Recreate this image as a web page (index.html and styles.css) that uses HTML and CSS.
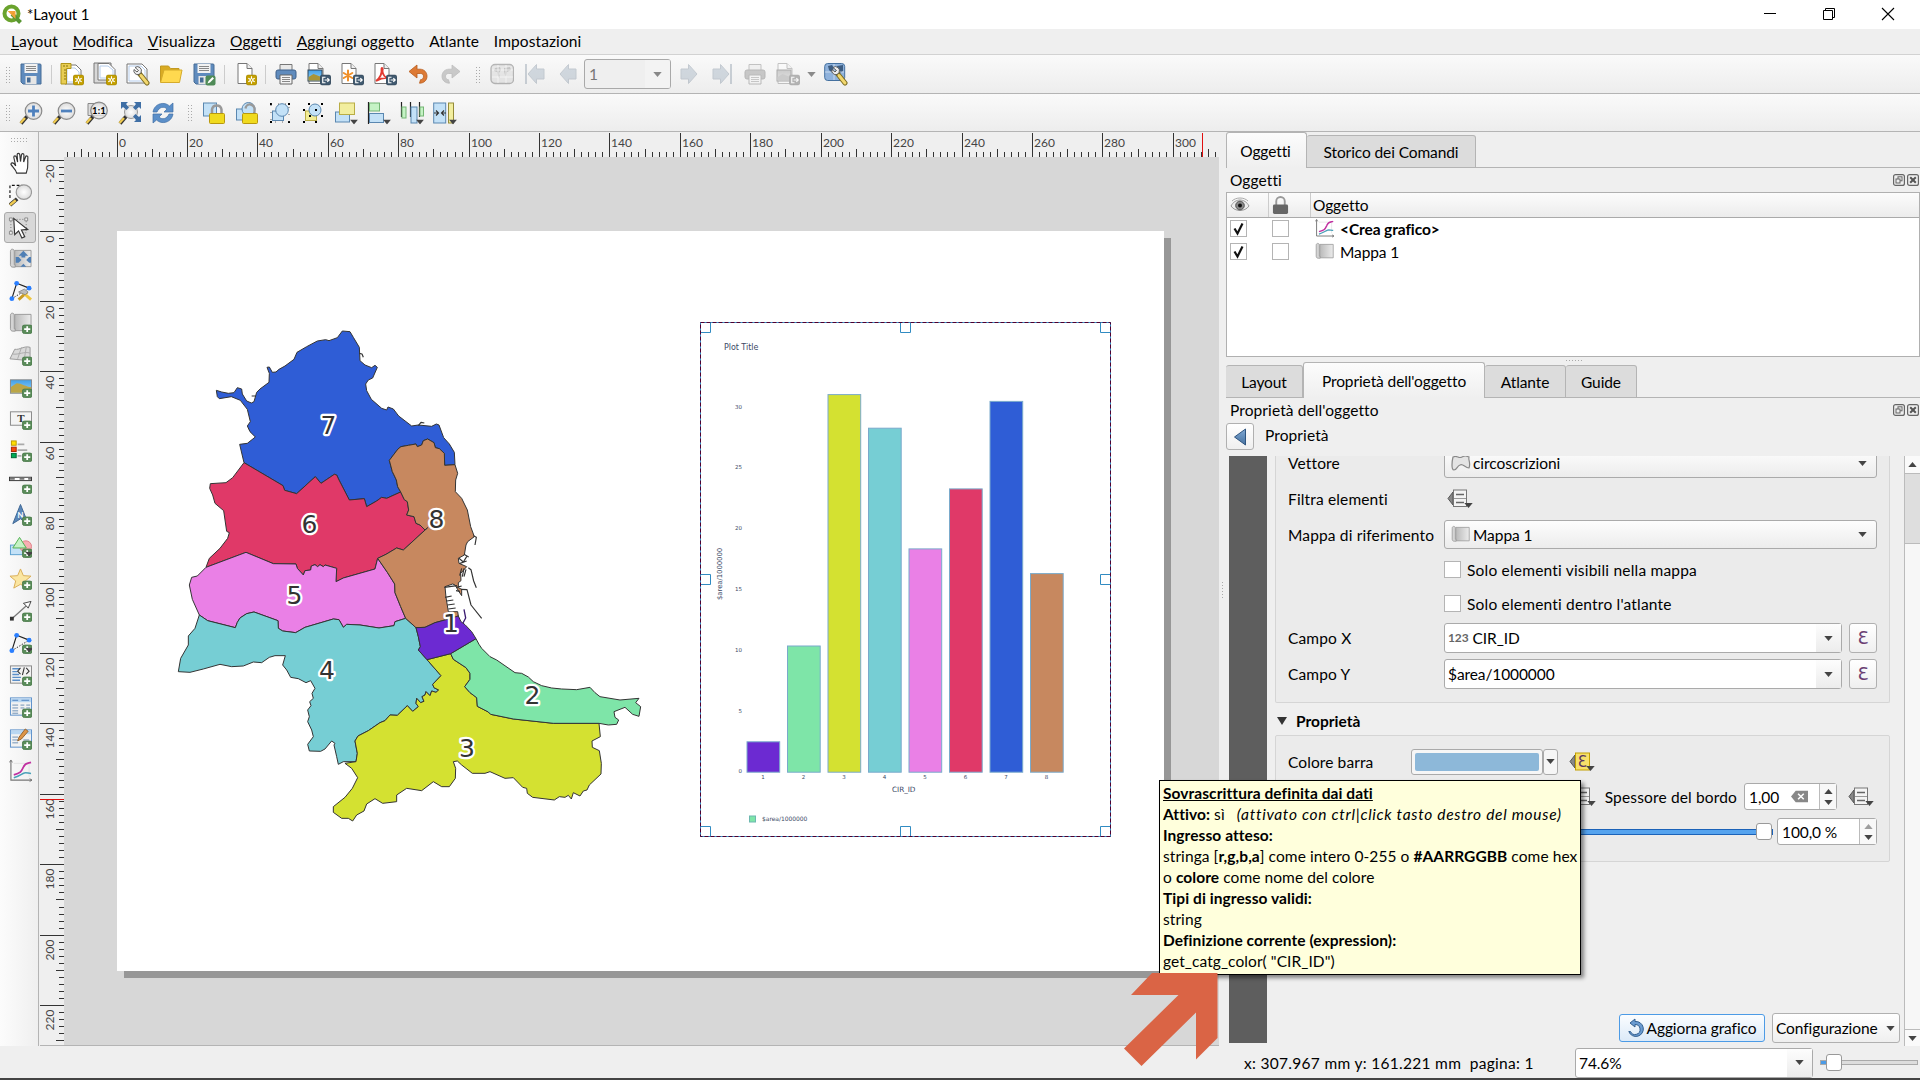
FILE: index.html
```html
<!DOCTYPE html>
<html lang="it">
<head>
<meta charset="utf-8">
<title>*Layout 1</title>
<link rel="stylesheet" href="styles.css">
</head>
<body>
<svg class="defs" aria-hidden="true">
  <defs>
    <linearGradient id="gGrey" x1="0" x2="1"><stop offset="0" stop-color="#b9b9b9"/><stop offset="1" stop-color="#ececec"/></linearGradient>
    <linearGradient id="gBlue" x1="0" y1="0" x2="0" y2="1"><stop offset="0" stop-color="#7fa8d4"/><stop offset="1" stop-color="#47719f"/></linearGradient>
    <linearGradient id="gSky" x1="0" y1="0" x2="0" y2="1"><stop offset="0" stop-color="#3f9fe8"/><stop offset="1" stop-color="#9fd4f5"/></linearGradient>
    <radialGradient id="gLens"><stop offset="0" stop-color="#fff"/><stop offset="1" stop-color="#dcdcdc"/></radialGradient>

    <symbol id="b-new" viewBox="0 0 12 12"><rect x=".5" y=".5" width="11" height="11" rx="2" fill="#c4a000" stroke="#a88a00"/><path d="M6 2v8M2.500 4l7 4M9.500 4l-7 4" stroke="#fff" stroke-width="1.200"/><circle cx="6" cy="6" r="1.500" fill="#c4a000" stroke="#fff"/></symbol>
    <symbol id="b-exp" viewBox="0 0 12 12"><rect x=".5" y=".5" width="11" height="11" rx="2" fill="#415a70" stroke="#33495c"/><path d="M6 3H3v6h3M5 6h5M8 4l2 2-2 2" fill="none" stroke="#fff" stroke-width="1.300"/></symbol>
    <symbol id="b-add" viewBox="0 0 12 11"><rect x=".5" y=".5" width="11" height="10" rx="2.500" fill="#5a8c5a" stroke="#4a7a4a"/><path d="M6 2.200v6.600M2.500 5.500h7" stroke="#fff" stroke-width="2"/></symbol>
    <symbol id="page" viewBox="0 0 24 24"><path d="M4 1.500h9l5 5v15H4z" fill="#fff" stroke="#777"/><path d="M13 1.500v5h5" fill="#eee" stroke="#777"/></symbol>
    <symbol id="wrench" viewBox="0 0 24 24"><path d="M13 11l8 10" stroke="#7a6a20" stroke-width="5" stroke-linecap="round"/><path d="M15 13.500l6 7.500" stroke="#f2d76e" stroke-width="3" stroke-linecap="round"/><path d="M9 5.500a4 4 0 0 1 6 5l-2 2a4 4 0 0 1-5-5l3 2.500 1.500-1.500z" fill="#eee" stroke="#555" stroke-width=".9"/></symbol>
    <symbol id="handle" viewBox="0 0 24 24"><path d="M2 22.500l6-7" stroke="#333" stroke-width="3.600"/><path d="M1.500 22l4.500-5" stroke="#f0cb52" stroke-width="2.500"/></symbol>
    <symbol id="tri" viewBox="0 0 10 6"><path d="M0 0h10L5 6z" fill="#444"/></symbol>
    <symbol id="tick" viewBox="0 0 15 15"><path d="M3.500 7.500L6.500 12.500 11.500 2.500" fill="none" stroke="#111" stroke-width="2.200"/></symbol>

    <symbol id="i-save" viewBox="0 0 24 24"><path d="M2 2h19a1 1 0 0 1 1 1v19H4l-2-2z" fill="#5f8bbd" stroke="#466c96"/><rect x="5.500" y="2" width="13" height="9" fill="#f2f2f2"/><path d="M7 4.500h10M7 6.500h10M7 8.500h10" stroke="#888"/><rect x="6.500" y="14" width="11" height="8" fill="#e6e6e6"/><rect x="8" y="15.500" width="3.500" height="5" fill="#466c96"/></symbol>
    <symbol id="i-saveas" viewBox="0 0 24 24"><use href="#i-save" width="24" height="24"/><rect x="13.500" y="13.500" width="10" height="10" rx="2" fill="#4f8b57"/><path d="M15.500 21.500l1-2.500 4-4 1.500 1.500-4 4z" fill="#fff"/></symbol>
    <symbol id="i-newlay" viewBox="0 0 24 24"><path d="M5 3h11l5 5v14H5z" fill="#fff" stroke="#777"/><path d="M7 6h8l4 4v10H7z" fill="none" stroke="#b5cdec"/><path d="M1 1.500h10v5H6.500V22H1z" fill="#e8cd52" stroke="#b09518"/><path d="M4 8h2M4 11h2M4 14h2M4 17h2M4 3v2M7 3v2" stroke="#8a7410"/><use href="#b-new" x="13" y="12.500" width="11" height="11"/></symbol>
    <symbol id="i-dup" viewBox="0 0 24 24"><path d="M1 1h17v20H1z" fill="#d8d8d8" stroke="#777"/><path d="M5 1.500h11l6 6V18H5z" fill="#fff" stroke="#777"/><path d="M7 4h8l5 4v8H7z" fill="none" stroke="#b5cdec"/><use href="#b-new" x="13" y="12.500" width="11" height="11"/></symbol>
    <symbol id="i-man" viewBox="0 0 24 24"><path d="M1 2h15l5 5v14H1z" fill="#fff" stroke="#777"/><path d="M3 4h12l4 4v11H3z" fill="none" stroke="#b5cdec"/><use href="#wrench" width="24" height="24"/></symbol>
    <symbol id="i-open" viewBox="0 0 24 24"><path d="M1.500 20V4h8l2 2.500H20V9" fill="#d9ab23" stroke="#c39a22"/><path d="M1.500 20.500L5 8h18l-2.500 12.500z" fill="#ffd94f" stroke="#d5ab2b"/></symbol>
    <symbol id="i-newpage" viewBox="0 0 24 24"><use href="#page" width="24" height="24"/><use href="#b-new" x="12" y="12.500" width="11" height="11"/></symbol>
    <symbol id="i-print" viewBox="0 0 24 24"><path d="M6 8V2.500h12V8" fill="#e9e9e9" stroke="#777"/><rect x="2" y="8" width="20" height="9" rx="2" fill="#5f8bbd" stroke="#3f618a"/><path d="M6 13h12v9H6z" fill="#f4f4f4" stroke="#666"/><path d="M8 15.500h8M8 17.500h8M8 19.500h8" stroke="#888"/></symbol>
    <symbol id="i-img" viewBox="0 0 24 24"><use href="#page" x="-2" width="24" height="24"/><rect x="1" y="8" width="14" height="11" fill="url(#gSky)" stroke="#345"/><path d="M1.500 15l5-3 8 3v3.500h-13z" fill="#a89438"/><use href="#b-exp" x="13" y="12.500" width="11" height="11"/></symbol>
    <symbol id="i-svg" viewBox="0 0 24 24"><use href="#page" x="-2" width="24" height="24"/><path d="M8 8.500v10M3.700 11l8.600 5M12.300 11l-8.600 5" stroke="#f0902a" stroke-width="2" stroke-linecap="round"/><use href="#b-exp" x="13" y="12.500" width="11" height="11"/></symbol>
    <symbol id="i-pdf" viewBox="0 0 24 24"><use href="#page" x="-2" width="24" height="24"/><path d="M3 19c4-3 6-8 5.500-12 0-2 2-1 1 2 0 4 3 7 6 7-4-.5-9 1-12.500 3z" fill="none" stroke="#e23b32" stroke-width="1.800"/><use href="#b-exp" x="13" y="12.500" width="11" height="11"/></symbol>
    <symbol id="i-undo" viewBox="0 0 24 24"><path d="M3 9.500L11 3v4.200h3c4 0 7 3 7 7 0 4-3 7-7.500 7l1-3.500c2 0 3-1.500 3-3.500 0-1.500-1-2.700-3-2.700H11V16z" fill="#dd7a35" stroke="#b75c1c" stroke-width=".8"/></symbol>
    <symbol id="i-atlas" viewBox="0 0 24 24"><rect x="1" y="2.500" width="22.500" height="19" rx="4" fill="#c6d0dd" stroke="#555" stroke-width="1.300"/><path d="M5 6l5-1 1 3-2 3 1 5-2-1-1-5-3-1zM14 6l6-1 1 3-4 2-1 5-1-2-1-4z" fill="#6b7d92"/><path d="M2 8h21M2 15h21M8 3v18M16 3v18" stroke="#fff" stroke-width=".8"/></symbol>
    <symbol id="i-prev" viewBox="0 0 24 24"><path d="M4 12L12.500 2.500V7H20v10h-7.500v4.500z" fill="#9aabbc" stroke="#7b8b9b"/></symbol>
    <symbol id="i-first" viewBox="0 0 24 24"><path d="M2 2h2v20H2z" fill="#8796a5"/><path d="M5 12l8.500-9.500V7H21v10h-7.500v4.500z" fill="#9aabbc" stroke="#7b8b9b"/></symbol>
    <symbol id="i-atset" viewBox="0 0 24 24"><rect x=".7" y="1.500" width="20" height="17" rx="3" fill="#8fb2dc" stroke="#44709f"/><path d="M4 4l4-1 2 3-2 5-3-3zM13 4l6-1v6l-4 3z" fill="#3d5d82"/><path d="M1 10h19M10 2v16" stroke="#dfe9f5" stroke-width=".7"/><use href="#wrench" width="24" height="24"/></symbol>

    <symbol id="i-zin" viewBox="0 0 24 24"><use href="#handle" width="24" height="24"/><circle cx="14.500" cy="10" r="8.300" fill="url(#gLens)" stroke="#8a8a8a" stroke-width="1.200"/><path d="M14.500 4.500v11M9 10h11" stroke="#4f81bd" stroke-width="2.800"/></symbol>
    <symbol id="i-zout" viewBox="0 0 24 24"><use href="#handle" width="24" height="24"/><circle cx="14.500" cy="10" r="8.300" fill="url(#gLens)" stroke="#8a8a8a" stroke-width="1.200"/><path d="M9 10h11" stroke="#4f81bd" stroke-width="2.800"/></symbol>
    <symbol id="i-z11" viewBox="0 0 24 24"><path d="M3 2.500h16v12H3z" fill="#ddd" stroke="#888"/><use href="#handle" width="24" height="24"/><circle cx="14" cy="9.500" r="8.300" fill="url(#gLens)" fill-opacity=".8" stroke="#8a8a8a" stroke-width="1.200"/><text x="14" y="13" text-anchor="middle" font-family="Lato" font-weight="bold" font-size="9.500">1:1</text></symbol>
    <symbol id="i-zfull" viewBox="0 0 24 24"><use href="#handle" width="24" height="24"/><circle cx="13" cy="11" r="6.500" fill="url(#gLens)" stroke="#999"/><path d="M3 1h7L8 3l3 3.500L8.500 9 5 6 3 8zM23 1v7l-2-2-3.500 3L15 6.500 18 3l-2-2zM23 21h-7l2-2-3-3.500 2.500-2.500 3.500 3 2-2z" fill="#3f6fa5"/></symbol>
    <symbol id="i-ref" viewBox="0 0 24 24"><path d="M2 11C3 5 8 2 13 2.500c2.500.3 4 1.300 5.500 2.500L22 2v9h-9l3-3c-3-3-8-2-10 3z" fill="#5b8fc9" stroke="#3f6fa5" stroke-width=".7"/><path d="M22 13c-1 6-6 9-11 8.500-2.500-.3-4-1.300-5.500-2.500L2 22v-9h9l-3 3c3 3 8 2 10-3z" fill="#5b8fc9" stroke="#3f6fa5" stroke-width=".7"/></symbol>
    <symbol id="i-lock" viewBox="0 0 24 24"><rect x="1.500" y="2" width="13" height="13" fill="#c3e1f7" stroke="#5a87b0"/><path d="M10 14V8.500a4.800 4.800 0 0 1 9.500 0V14" fill="none" stroke="#999" stroke-width="2.500"/><rect x="7.500" y="12.500" width="15" height="10" rx="1" fill="#f0da1e" stroke="#b8980e"/></symbol>
    <symbol id="i-unlock" viewBox="0 0 24 24"><rect x="1.500" y="8" width="12" height="11" fill="#c3e1f7" stroke="#5a87b0"/><circle cx="13.500" cy="8" r="6.500" fill="#c3e1f7" stroke="#5a87b0"/><path d="M19.500 14V8.500a4.500 4.500 0 0 0-9-1" fill="none" stroke="#999" stroke-width="2.300"/><rect x="7.500" y="12.500" width="15" height="10" rx="1" fill="#f0da1e" stroke="#b8980e"/></symbol>
    <symbol id="i-group" viewBox="0 0 24 24"><rect x="4.500" y="10" width="11" height="9.500" fill="#c3e1f7" stroke="#5a87b0"/><circle cx="14" cy="9" r="6.300" fill="#c3e1f7" stroke="#5a87b0"/><path d="M2 2h2v2H2zM20 2h2v2h-2zM2 20h2v2H2zM20 20h2v2h-2z"/><path d="M3 3h18v18H3z" fill="none" stroke="#444" stroke-width=".8" stroke-dasharray="1 6"/></symbol>
    <symbol id="i-ungroup" viewBox="0 0 24 24"><rect x="4.500" y="10" width="11" height="9.500" fill="#f2ec95" stroke="#b9ad45"/><circle cx="14" cy="9" r="6" fill="#c3e1f7" stroke="#5a87b0"/><path d="M7 2h2v2H7zM20 2h2v2h-2zM2 8h2v2H2zM2 20h2v2H2zM14 20h2v2h-2zM20 14h2v2h-2zM8 14h2v2H8zM14 8h2v2h-2z"/></symbol>
    <symbol id="i-raise" viewBox="0 0 24 24"><rect x="1.500" y="11" width="14" height="10" fill="#c3e1f7" stroke="#5a87b0"/><rect x="5.500" y="2" width="15" height="11.500" fill="#f2ee9f" stroke="#b9ad45"/><use href="#tri" x="16" y="18.500" width="8" height="5"/></symbol>
    <symbol id="i-align" viewBox="0 0 24 24"><path d="M1.500 1v22" stroke="#222" stroke-width="1.200"/><rect x="2.500" y="2" width="10" height="8" fill="#c5f2c5" stroke="#74b574"/><rect x="2.500" y="12.500" width="14" height="9" fill="#c3e1f7" stroke="#5a87b0"/><use href="#tri" x="16" y="18.500" width="8" height="5"/></symbol>
    <symbol id="i-dist" viewBox="0 0 24 24"><path d="M1.500 1v15M10.500 1v15M19.500 1v15" stroke="#222" stroke-width="1.200"/><rect x="2" y="6" width="4" height="11" fill="#c5f2c5" stroke="#74b574"/><rect x="11" y="6" width="6" height="16" fill="#c3e1f7" stroke="#5a87b0"/><rect x="20" y="6" width="3.500" height="9" fill="#c5f2c5" stroke="#74b574"/><use href="#tri" x="16" y="18.500" width="8" height="5"/></symbol>
    <symbol id="i-resize" viewBox="0 0 24 24"><rect x=".7" y="2" width="12" height="20" fill="#c3e1f7" stroke="#5a87b0"/><rect x="15.500" y="2" width="5" height="20" fill="#f2ee9f" stroke="#958b38"/><path d="M1 12h4M3 9.500l2.500 2.500L3 14.500M13 12H9M11 9.500L8.500 12l2.500 2.500" fill="none" stroke="#333" stroke-width="1.200"/><use href="#tri" x="16" y="18.500" width="8" height="5"/></symbol>

    <symbol id="i-hand" viewBox="0 0 24 24"><path d="M8 22.500c-1-4-4-6-6-9 0-2 2-2 3-1l2 2.500L5 6c0-2 2.300-2 2.700 0L9 11 8.500 3.500c0-2 2.500-2 2.800 0L12 10.500l1-7c.4-1.900 2.700-1.500 2.600.3L15.300 11l2-5.500c.7-1.600 2.700-1 2.400.8C19 11 21 16 18 22.500z" fill="#fff" stroke="#333" stroke-width="1.200"/></symbol>
    <symbol id="i-zsel" viewBox="0 0 24 24"><path d="M1 15V2h13" fill="none" stroke="#111" stroke-width="1.200" stroke-dasharray="3 2"/><path d="M1 22.500l7.500-6.500" stroke="#333" stroke-width="4"/><path d="M1 22.500l6-5" stroke="#f0cb52" stroke-width="2.600"/><ellipse cx="15.500" cy="9" rx="8" ry="7.500" fill="url(#gLens)" stroke="#999" stroke-width="1.200"/></symbol>
    <symbol id="i-sel" viewBox="0 0 24 24"><rect x="3" y="3" width="16" height="14" fill="none" stroke="#777" stroke-dasharray="1 2"/><path d="M1.500 1.500h3v3h-3zM17.500 1.500h3v3h-3zM1.500 15.500h3v3h-3z" fill="#eee" stroke="#777" stroke-width=".8"/><path d="M6 2l1 17 4-4 3.500 7.500 3-1.500-3.500-7 6.500-.5z" fill="#fff" stroke="#333" stroke-width="1.200"/></symbol>
    <symbol id="mapicon" viewBox="0 0 24 24"><path d="M6 3h17v17H6z" fill="url(#gGrey)" stroke="#999"/><path d="M1.500 4c0-3 4-3 4 0v14h1v2.500H4c-1.500 0-2.500-1-2.500-2.500z" fill="#d4d4d4" stroke="#999"/></symbol>
    <symbol id="i-move" viewBox="0 0 24 24"><use href="#mapicon" width="24" height="24"/><path d="M15 3.500l5 5h-3v2h-4v-2h-3zM7 10h3l3 3-3 3H7zM23 10h-2l-3 3 3 3h2zM12 20l3-3 3 3z" fill="#4f7fb5"/></symbol>
    <symbol id="i-nodes" viewBox="0 0 24 24"><path d="M3 20L8 4l13 5" fill="none" stroke="#222" stroke-width="1.200"/><path d="M3 20L21 9" stroke="#222" stroke-dasharray="1.500 1.500"/><circle cx="3" cy="20" r="2.500" fill="#2a7fff"/><circle cx="8" cy="4" r="2.500" fill="#2a7fff"/><circle cx="21" cy="9" r="2.500" fill="#2a7fff"/></symbol>
    <symbol id="i-editn" viewBox="0 0 24 24"><use href="#i-nodes" width="24" height="24"/><path d="M10 21l9-8" stroke="#c89a22" stroke-width="3"/><path d="M14 13l9 8" stroke="#f0c63f" stroke-width="3"/><path d="M10 13l6-3 4 3-3 3z" fill="#bbb" stroke="#777" stroke-width=".7"/></symbol>
    <symbol id="i-addmap" viewBox="0 0 24 24"><use href="#mapicon" width="24" height="24"/><use href="#b-add" x="13.500" y="13.500" width="11" height="10"/></symbol>
    <symbol id="i-add3d" viewBox="0 0 24 24"><path d="M1 16L6 6c5 1 10-4 16-2v14z" fill="#d9d9d9" stroke="#999"/><path d="M4 11c6 1 12-3 18-1M9 16l4-12M16 16l2-12" fill="none" stroke="#aaa"/><use href="#b-add" x="13.500" y="13.500" width="11" height="10"/></symbol>
    <symbol id="i-addimg" viewBox="0 0 24 24"><rect x="1.500" y="4.500" width="22" height="14" fill="url(#gSky)" stroke="#888"/><path d="M2 12l6-4c5 0 10 4 15 4v6H2z" fill="#bba547"/><use href="#b-add" x="13.500" y="13.500" width="11" height="10"/></symbol>
    <symbol id="i-addtxt" viewBox="0 0 24 24"><rect x="1.500" y="4.500" width="22" height="14" fill="#f4f4f4" stroke="#888"/><text x="12.500" y="15" text-anchor="middle" font-family="Liberation Serif" font-size="11.500" fill="#333" font-weight="bold">T</text><use href="#b-add" x="13.500" y="13.500" width="11" height="10"/></symbol>
    <symbol id="i-addleg" viewBox="0 0 24 24"><rect x="2.500" y="1.500" width="5" height="4.500" fill="#fd0" stroke="#b90"/><rect x="2.500" y="8" width="5" height="4.500" fill="#f4480c" stroke="#a20"/><rect x="2.500" y="14.500" width="5" height="4.500" fill="#0a5" stroke="#063"/><path d="M9 5h7M9 11h10M9 17h4" stroke="#aaa" stroke-width="1.800"/><use href="#b-add" x="13.500" y="13.500" width="11" height="10"/></symbol>
    <symbol id="i-addbar" viewBox="0 0 24 24"><rect x=".5" y="6" width="23" height="3.500" fill="#fff" stroke="#333"/><path d="M1 7.700h5M11 7.700h5M20 7.700h3" stroke="#777" stroke-width="2"/><use href="#b-add" x="13.500" y="13.500" width="11" height="10"/></symbol>
    <symbol id="i-addn" viewBox="0 0 24 24"><path d="M12 1l8 20-8-5-8 5z" fill="#5a86b8" stroke="#3d6592"/><text x="12" y="15" text-anchor="middle" font-family="Lato" font-size="8" fill="#fff" font-weight="bold">N</text><use href="#b-add" x="13.500" y="13.500" width="11" height="10"/></symbol>
    <symbol id="i-addshp" viewBox="0 0 24 24"><rect x="1.500" y="10" width="15" height="10" fill="#c3e1f7" stroke="#5aa0d0"/><circle cx="17.500" cy="11.500" r="6" fill="#f7aeb2" stroke="#e08086"/><path d="M11 2l7 11H4z" fill="#c5f2c5" stroke="#4eb04e"/><use href="#b-add" x="13.500" y="13.500" width="11" height="10"/><use href="#tri" x="16.500" y="17" width="9" height="5"/></symbol>
    <symbol id="i-addstar" viewBox="0 0 24 24"><path d="M12 1.500l3 7 8 .5-6 5 2 7.500-7-4-7 4 2-7.500-6-5 8-.5z" fill="#fbe6a2" stroke="#d8ac55"/><use href="#b-add" x="13.500" y="13.500" width="11" height="10"/></symbol>
    <symbol id="i-addarr" viewBox="0 0 24 24"><path d="M3 20L21 4" stroke="#777" stroke-width="1.300"/><path d="M15 4l8-2-3 7-2-2.500z" fill="#fff" stroke="#444"/><rect x="1" y="18" width="4" height="4" fill="#333"/><use href="#b-add" x="13.500" y="13.500" width="11" height="10"/></symbol>
    <symbol id="i-addnod" viewBox="0 0 24 24"><use href="#i-nodes" width="24" height="24"/><use href="#b-add" x="13.500" y="13.500" width="11" height="10"/><use href="#tri" x="16.500" y="17" width="9" height="5"/></symbol>
    <symbol id="i-addhtml" viewBox="0 0 24 24"><rect x="1.500" y="2.500" width="22" height="18" fill="#f2f2f2" stroke="#888"/><path d="M3.500 5.500h8M3.500 8.500h5M3.500 11.500h7M3.500 14.500h9M3.500 17.500h8" stroke="#5b8fc9" stroke-width="1.400"/><path d="M12 4.500L9 8l3 3M18 4.500L21 8l-3 3M16 4l-2 8" fill="none" stroke="#333" stroke-width="1.100"/><use href="#b-add" x="13.500" y="13.500" width="11" height="10"/></symbol>
    <symbol id="i-addtab" viewBox="0 0 24 24"><rect x="1.500" y="2.500" width="22" height="18" fill="#f2f2f2" stroke="#5b8fc9"/><path d="M2 3h21v4H2z" fill="#b9d7f2"/><path d="M3.500 5h6M13 5h8" stroke="#4f81bd"/><path d="M3.500 10h6M12 10h4M18 10h4M3.500 13h6M12 13h4M18 13h4M3.500 16h6M3.500 18.500h6" stroke="#6d8fb5"/><use href="#b-add" x="13.500" y="13.500" width="11" height="10"/></symbol>
    <symbol id="i-addfix" viewBox="0 0 24 24"><rect x="1.500" y="2.500" width="22" height="18" fill="#f2f2f2" stroke="#5b8fc9"/><path d="M2 3h21v4H2z" fill="#b9d7f2"/><path d="M3.500 10h6M3.500 13h6M3.500 16h6M15 13h6" stroke="#6d8fb5"/><path d="M9 14l1.500-4L17 1.500 20 4l-7 8z" fill="#dd9548" stroke="#855018" stroke-width=".8"/><use href="#b-add" x="13.500" y="13.500" width="11" height="10"/></symbol>
    <symbol id="i-plot" viewBox="0 0 24 24"><path d="M2 1v20.500h22" fill="none" stroke="#777" stroke-width="1.200"/><path d="M.5 3L2 .5 3.500 3M21.500 20l2.500 1.500-2.500 1.500" fill="none" stroke="#777"/><path d="M5 4h16v14" fill="none" stroke="#e3e3e3"/><path d="M5 19c7-2 8-4 11-5 3-.5 4 .5 7 .5" fill="none" stroke="#4aa0b8" stroke-width="1.600"/><path d="M5 16c8-2 8-4 10-8 2-5 5-4 8-5" fill="none" stroke="#c030a0" stroke-width="1.800"/></symbol>

    <symbol id="i-dd" viewBox="0 0 26 20"><path d="M6 3v13L1 9.500z" fill="#888" stroke="#555"/><rect x="6.500" y="1" width="13" height="16.500" fill="#f4f4f4" stroke="#777"/><path d="M9 5.500h8M9 13.500h8" stroke="#666" stroke-width="1.600"/><path d="M7 9.500h12" stroke="#999"/><use href="#tri" x="17" y="14" width="9" height="5"/></symbol>
    <symbol id="i-dde" viewBox="0 0 26 20"><path d="M6 3v13L1 9.500z" fill="#888" stroke="#555"/><rect x="6.500" y="1" width="14" height="17" fill="#f7e06a" stroke="#c4a000"/><text x="13.500" y="15" text-anchor="middle" font-family="DejaVu Sans" font-size="15" fill="#5b3560">Ɛ</text><use href="#tri" x="17" y="14" width="9" height="5"/></symbol>
    <symbol id="i-poly" viewBox="0 0 20 16"><path d="M2 2c5-2 5 2 9 0 4-2 4-1 7 0-1 3 2 6 0 11-4 0-6-5-9-3-3 1-3 5-6 5-3 0-2-9-1-13z" fill="#e4e4e4" stroke="#888" stroke-width="1.200"/></symbol>
    <symbol id="i-float" viewBox="0 0 12 12"><rect x=".6" y=".6" width="10.800" height="10.800" rx="2" fill="none" stroke="#666" stroke-width="1.200"/><rect x="5" y="2.800" width="4" height="4" fill="none" stroke="#666"/><rect x="3" y="5" width="4" height="4" fill="#efefef" stroke="#666"/></symbol>
    <symbol id="i-close" viewBox="0 0 12 12"><rect x=".6" y=".6" width="10.800" height="10.800" rx="2" fill="none" stroke="#666" stroke-width="1.200"/><path d="M3.200 3.200l5.600 5.600M8.800 3.200L3.200 8.800" stroke="#555" stroke-width="2"/></symbol>
  </defs>
</svg>

<header class="titlebar">
  <svg class="logo" viewBox="0 0 20 20"><circle cx="9.500" cy="9.500" r="7" fill="none" stroke="#6aa32d" stroke-width="4"/><path d="M10 10l8.500 8.500" stroke="#589632" stroke-width="4"/><path d="M8 8h4.500v4.500z" fill="#ee7913" stroke="#f2a33a" stroke-width="2"/></svg>
  <span class="wtitle">*Layout 1</span>
  <div class="winbtns">
    <svg viewBox="0 0 14 14"><path d="M1 6.500h12" stroke="#000"/></svg>
    <svg viewBox="0 0 14 14"><path d="M1.500 3.500h9v9h-9zM3.500 3.500v-2h9v9h-2" fill="none" stroke="#000"/></svg>
    <svg viewBox="0 0 14 14"><path d="M1 1l12 12M13 1L1 13" stroke="#000" stroke-width="1.100"/></svg>
  </div>
</header>

<nav class="menubar">
  <span><u>L</u>ayout</span><span><u>M</u>odifica</span><span><u>V</u>isualizza</span><span><u>O</u>ggetti</span><span><u>A</u>ggiungi oggetto</span><span>Atlante</span><span>Impostazioni</span>
</nav>

<div class="toolbar">
  <i class="grip"></i>
  <span class="slot"><svg><use href="#i-save"/></svg></span>
  <i class="sep s8"></i>
  <span class="slot"><svg><use href="#i-newlay"/></svg></span>
  <span class="slot"><svg><use href="#i-dup"/></svg></span>
  <span class="slot"><svg><use href="#i-man"/></svg></span>
  <span class="slot"><svg><use href="#i-open"/></svg></span>
  <span class="slot"><svg><use href="#i-saveas"/></svg></span>
  <i class="sep s9"></i>
  <span class="slot"><svg><use href="#i-newpage"/></svg></span>
  <i class="sep s7"></i>
  <span class="slot"><svg><use href="#i-print"/></svg></span>
  <span class="slot"><svg><use href="#i-img"/></svg></span>
  <span class="slot"><svg><use href="#i-svg"/></svg></span>
  <span class="slot"><svg><use href="#i-pdf"/></svg></span>
  <span class="slot"><svg><use href="#i-undo"/></svg></span>
  <span class="slot off flip"><svg class="greyed"><use href="#i-undo"/></svg></span>
  <i class="grip mid"></i>
  <span class="slot off"><svg class="greyed"><use href="#i-atlas"/></svg></span>
  <span class="slot off"><svg><use href="#i-first"/></svg></span>
  <span class="slot off"><svg><use href="#i-prev"/></svg></span>
  <div class="pagecombo"><span>1</span><b><svg class="tri"><use href="#tri"/></svg></b></div>
  <span class="slot off flip"><svg><use href="#i-prev"/></svg></span>
  <span class="slot off flip"><svg><use href="#i-first"/></svg></span>
  <span class="slot off"><svg class="greyed"><use href="#i-print"/></svg></span>
  <span class="slot off"><svg class="greyed"><use href="#i-img"/></svg></span>
  <span class="ddarrow"><svg class="tri"><use href="#tri"/></svg></span>
  <span class="slot"><svg><use href="#i-atset"/></svg></span>
</div>

<div class="toolbar second">
  <i class="grip"></i>
  <span class="slot"><svg><use href="#i-zin"/></svg></span>
  <span class="slot"><svg><use href="#i-zout"/></svg></span>
  <span class="slot"><svg><use href="#i-z11"/></svg></span>
  <span class="slot"><svg><use href="#i-zfull"/></svg></span>
  <span class="slot"><svg><use href="#i-ref"/></svg></span>
  <i class="grip mid"></i>
  <span class="slot"><svg><use href="#i-lock"/></svg></span>
  <span class="slot"><svg><use href="#i-unlock"/></svg></span>
  <span class="slot"><svg><use href="#i-group"/></svg></span>
  <span class="slot"><svg><use href="#i-ungroup"/></svg></span>
  <span class="slot"><svg><use href="#i-raise"/></svg></span>
  <span class="slot"><svg><use href="#i-align"/></svg></span>
  <span class="slot"><svg><use href="#i-dist"/></svg></span>
  <span class="slot"><svg><use href="#i-resize"/></svg></span>
</div>

<main class="work">
  <aside class="toolbox">
    <i class="hgrip"></i>
    <span><svg><use href="#i-hand"/></svg></span>
    <span><svg><use href="#i-zsel"/></svg></span>
    <span class="active"><svg><use href="#i-sel"/></svg></span>
    <span><svg><use href="#i-move"/></svg></span>
    <span><svg><use href="#i-editn"/></svg></span>
    <span><svg><use href="#i-addmap"/></svg></span>
    <span><svg><use href="#i-add3d"/></svg></span>
    <span><svg><use href="#i-addimg"/></svg></span>
    <span><svg><use href="#i-addtxt"/></svg></span>
    <span><svg><use href="#i-addleg"/></svg></span>
    <span><svg><use href="#i-addbar"/></svg></span>
    <span><svg><use href="#i-addn"/></svg></span>
    <span><svg><use href="#i-addshp"/></svg></span>
    <span><svg><use href="#i-addstar"/></svg></span>
    <span><svg><use href="#i-addarr"/></svg></span>
    <span><svg><use href="#i-addnod"/></svg></span>
    <span><svg><use href="#i-addhtml"/></svg></span>
    <span><svg><use href="#i-addtab"/></svg></span>
    <span><svg><use href="#i-addfix"/></svg></span>
    <span><svg><use href="#i-plot"/></svg></span>
  </aside>

  <section class="stage">
    <div class="corner"></div>
    <svg class="hruler" id="hruler" viewBox="64 133 1155 24"></svg>
    <svg class="vruler" id="vruler" viewBox="40 157 24 888"></svg>
    <svg class="canvas" viewBox="64 157 1155 888">
      <rect x="124" y="238" width="1047" height="740" fill="#979797"/>
      <rect x="117" y="231" width="1047" height="740" fill="#fff"/>
      <g transform="translate(160 310) scale(.33333)" stroke="#333" stroke-width="3" stroke-linejoin="round">
        <path fill="#2f5dd6" d="M169 241L185 246 205 250 222 248 232 233 245 237 247 252 260 273 274 279 282 275 290 247 300 237 327 217 328 190 321 172 328 171 337 187 348 186 357 178 375 168 402 148 411 127 440 110 472 93 497 89 507 92 532 83 547 63 570 65 580 82 598 112 600 152 615 165 635 173 645 166 652 172 638 204 625 210 617 222 620 242 634 268 665 295 680 300 684 291 700 297 716 318 755 348 775 345 815 349 829 342 837 345 851 383 868 402 883 427 885 464 854 466 853 430 838 416 826 413 822 398 803 387 790 392 785 405 772 410 768 402 745 406 723 410 714 417 688 451 697 485 702 495 709 510 713 530 722 546 680 565 665 562 650 573 620 590 613 566 568 570 537 510 530 495 523 493 483 520 466 500 410 551 374 541 369 527 252 458 239 403 262 400 286 381 270 365 262 348 271 335 262 298 241 271 214 260 178 266 172 260Z"/>
        <path fill="#e03968" d="M252 458L369 527 374 541 410 551 466 500 483 520 523 493 530 495 537 510 568 570 613 566 620 590 650 573 665 562 680 565 722 546 733 569 742 575 746 600 740 615 762 620 768 640 780 645 795 660 803 653 730 720 710 714 678 733 653 745 645 777 550 804 528 815 530 775 495 765 490 770 480 764 473 770 465 764 454 768 452 780 435 782 430 795 412 775 408 762 340 761 258 727 138 772 148 745 180 715 203 685 208 668 200 664 191 602 165 580 158 555 149 535 151 521 198 518 218 503Z"/>
        <path fill="#ea80e6" d="M138 772L258 727 340 761 408 762 412 775 430 795 435 782 452 780 454 768 465 764 473 770 480 764 490 770 495 765 530 775 528 815 550 804 645 777 653 745 682 787 704 822 705 848 722 890 737 925 705 935 702 947 657 954 600 945 560 943 550 952 537 929 520 927 435 952 407 968 368 963 355 955 354 932 282 906 260 911 240 924 232 937 226 953 143 932 118 915 97 868 88 825 95 802 112 798Z"/>
        <path fill="#76ced4" d="M118 915L143 932 226 953 232 937 240 924 260 911 282 906 354 932 355 955 368 963 407 968 435 952 520 927 537 929 550 952 560 943 600 945 657 954 702 947 705 935 737 925 768 953 775 980 781 1010 775 1020 801 1049 843 1097 818 1123 822 1133 836 1140 828 1147 815 1143 810 1157 798 1145 795 1155 786 1160 792 1174 782 1178 770 1165 768 1180 775 1190 758 1204 742 1187 712 1216 690 1215 675 1232 660 1238 625 1262 594 1278 585 1293 592 1330 588 1355 550 1355 535 1363 530 1340 522 1305 525 1300 515 1293 495 1317 482 1324 448 1323 443 1303 460 1280 455 1260 443 1235 448 1220 443 1200 453 1187 449 1175 460 1165 456 1150 465 1135 452 1112 438 1118 415 1106 392 1102 380 1080 368 1065 376 1037 345 1037 328 1042 305 1058 280 1056 250 1068 215 1070 180 1063 130 1077 90 1087 55 1085 62 1045 85 1005 85 978 105 955Z"/>
        <path fill="#d4e131" d="M801 1049L872 1031 880 1048 918 1073 930 1090 930 1108 914 1130 930 1148 950 1163 952 1189 985 1206 992 1213 1060 1227 1180 1240 1317 1240 1321 1280 1296 1293 1297 1312 1318 1322 1324 1360 1323 1392 1288 1425 1281 1440 1270 1443 1260 1458 1240 1448 1234 1467 1225 1456 1215 1462 1198 1460 1183 1470 1118 1462 1102 1450 1100 1435 1088 1432 1060 1403 1035 1405 990 1385 975 1390 937 1390 905 1365 892 1353 880 1355 887 1375 886 1405 868 1430 845 1430 820 1415 785 1442 740 1435 710 1455 710 1475 668 1480 645 1466 620 1482 612 1503 590 1515 578 1533 565 1525 545 1525 520 1507 520 1490 555 1462 577 1435 593 1403 575 1375 555 1360 588 1355 592 1330 585 1293 594 1278 625 1262 660 1238 675 1232 690 1215 712 1216 742 1187 758 1204 775 1190 768 1180 770 1165 782 1178 792 1174 786 1160 795 1155 798 1145 810 1157 815 1143 828 1147 836 1140 822 1133 818 1123 843 1097Z"/>
        <path fill="#7ee5a8" d="M948 986L957 1003 965 1015 990 1040 1010 1050 1065 1088 1085 1090 1105 1101 1120 1115 1145 1127 1175 1134 1205 1137 1250 1139 1290 1132 1305 1148 1320 1160 1380 1170 1437 1165 1427 1178 1442 1190 1437 1219 1418 1213 1395 1192 1362 1205 1365 1222 1376 1230 1370 1243 1345 1245 1317 1240 1180 1240 1060 1227 992 1213 985 1206 952 1189 950 1163 930 1148 914 1130 930 1108 930 1090 918 1073 880 1048 872 1031Z"/>
        <path fill="#c7885f" d="M722 546L713 530 709 510 702 495 697 485 688 451 714 417 723 410 745 406 768 402 772 410 785 405 790 392 803 387 822 398 826 413 838 416 853 430 854 466 885 464 893 490 887 510 886 545 905 565 922 600 932 650 943 680 923 695 918 705 913 735 895 745 897 760 920 770 902 790 903 812 895 818 895 833 905 838 905 857 897 845 885 825 878 822 855 830 858 862 865 905 893 905 895 918 862 928 825 938 795 952 768 953 737 925 722 890 705 848 704 822 682 787 653 745 678 733 710 714 730 720 803 653 795 660 780 645 768 640 762 620 740 615 746 600 742 575 733 569Z"/>
        <path fill="#6c2ad2" d="M768 953L795 952 825 938 862 928 895 918 903 935 915 944 935 965 948 986 872 1031 801 1049 775 1020 781 1010 775 980Z"/>
        <g fill="none"><path d="M598 130l8 2 4 10M275 258h12M775 347l8-10 10 2M940 677l9 5-4 23M896 744l14 12 10-16M912 733l14 8M900 760l20-7M905 775l-6 22M912 775l-5 25M918 778l-6 22M925 773l8 6 8 34 8 20M903 838l18 1 12 46 32 40M855 862l20-4M860 873l20-3M862 885l22-3M865 897l22-3M853 832l38-5M890 832l15-4M888 842l12 2" stroke-width="3.500"/><path d="M912 898l5 26-8 15" stroke="#3a1a70" stroke-width="4"/></g>
      </g>
      <g class="maplabels">
        <text x="328.500" y="434">7</text><text x="309.500" y="533">6</text><text x="436.500" y="528">8</text><text x="294.500" y="603.500">5</text><text x="327" y="679">4</text><text x="451" y="632">1</text><text x="532.500" y="704">2</text><text x="467" y="757">3</text>
      </g>
      <g id="bars" stroke="#7aaacb" stroke-width="1"></g>
      <g class="plottext">
        <text x="724" y="350" font-size="8">Plot Title</text>
        <text x="892" y="791.500" font-size="7.300">CIR_ID</text>
        <text x="762" y="821" font-size="6">$area/1000000</text>
        <text transform="translate(722 600) rotate(-90)" font-size="6.900">$area/1000000</text>
        <g id="ticks" font-size="5.500"></g>
      </g>
      <rect x="749.500" y="816" width="6" height="6" fill="#7ee5a8" stroke="#6cb8b0"/>
      <rect x="700.500" y="322.500" width="410" height="514" fill="none" stroke="#3a9bd0"/>
      <path fill="#fff" stroke="#318bc2" d="M700.500 322.500h10v10h-10zM900.500 322.500h10v10h-10zM1100.500 322.500h10v10h-10zM700.500 574.500h10v10h-10zM1100.500 574.500h10v10h-10zM700.500 826.500h10v10h-10zM900.500 826.500h10v10h-10zM1100.500 826.500h10v10h-10z"/>
      <rect x="700.500" y="322.500" width="410" height="514" fill="none" stroke="#500030" stroke-dasharray="4 2"/>
    </svg>
  </section>

  <div class="vsplit"><i></i></div>

  <section class="dock">
    <div class="tabs"><span class="on t1">Oggetti</span><span class="t2">Storico dei Comandi</span></div>
    <div class="docktitle">Oggetti<em><svg><use href="#i-float"/></svg><svg><use href="#i-close"/></svg></em></div>
    <div class="table">
      <div class="thead">
        <span class="c1"><svg class="eye" viewBox="0 0 20 16"><path d="M1 9c4-8 14-8 18 0-4 6-14 6-18 0z" fill="#eee" stroke="#999"/><path d="M2 4c4-4 12-4 16 0" fill="none" stroke="#aaa"/><circle cx="10" cy="8.500" r="4.300" fill="#888" stroke="#555"/><circle cx="10" cy="8.500" r="2" fill="#111"/></svg></span>
        <span class="c1"><svg class="padlock" viewBox="0 0 18 20"><path d="M4.500 10V6a4.500 4.500 0 0 1 9 0v4" fill="none" stroke="#999" stroke-width="2"/><rect x="1" y="9.500" width="16" height="10" rx="1.500" fill="#666"/></svg></span>
        <span>Oggetto</span>
      </div>
      <div class="trow"><span class="c1"><i class="check"><svg><use href="#tick"/></svg></i></span><span class="c1"><i class="check"></i></span><svg><use href="#i-plot"/></svg><b>&lt;Crea grafico&gt;</b></div>
      <div class="trow"><span class="c1"><i class="check"><svg><use href="#tick"/></svg></i></span><span class="c1"><i class="check"></i></span><svg><use href="#mapicon"/></svg>Mappa 1</div>
    </div>
    <div class="hsplit"><i></i></div>
    <div class="tabs low"><span class="l1">Layout</span><span class="on l2">Proprietà dell'oggetto</span><span class="l3">Atlante</span><span class="l4">Guide</span></div>
    <div class="docktitle low">Proprietà dell'oggetto<em><svg><use href="#i-float"/></svg><svg><use href="#i-close"/></svg></em></div>
    <div class="back"><span class="btn"><svg viewBox="0 0 14 18"><path d="M12.500 1v16L1.500 9z" fill="url(#gBlue)" stroke="#2f5580"/></svg></span>Proprietà</div>
    <div class="props">
      <div class="darkstrip"></div>
      <div class="form">
        <div class="group first">
          <div class="frow cut"><label>Vettore</label><div class="combo"><svg class="poly"><use href="#i-poly"/></svg>circoscrizioni<svg class="tri"><use href="#tri"/></svg></div></div>
          <div class="frow filt"><label>Filtra elementi</label><svg class="dd"><use href="#i-dd"/></svg></div>
          <div class="frow"><label>Mappa di riferimento</label><div class="combo"><svg class="mp"><use href="#mapicon"/></svg>Mappa 1<svg class="tri"><use href="#tri"/></svg></div></div>
          <div class="frow chk c-a"><label></label><i class="check"></i>Solo elementi visibili nella mappa</div>
          <div class="frow chk c-b"><label></label><i class="check"></i>Solo elementi dentro l'atlante</div>
          <div class="frow fx"><label>Campo X</label><div class="edit"><small>123</small>CIR_ID<b><svg class="tri"><use href="#tri"/></svg></b></div><span class="btn eps">Ɛ</span></div>
          <div class="frow fy"><label>Campo Y</label><div class="edit">$area/1000000<b><svg class="tri"><use href="#tri"/></svg></b></div><span class="btn eps">Ɛ</span></div>
        </div>
        <div class="ghead"><svg viewBox="0 0 10 8"><path d="M0 0h10L5 8z" fill="#333"/></svg>Proprietà</div>
        <div class="group second">
          <div class="prow"><label>Colore barra</label><span class="color"><i></i></span><span class="cdd"><svg class="tri"><use href="#tri"/></svg></span><svg class="dd"><use href="#i-dde"/></svg></div>
          <div class="prow right"><svg class="dd"><use href="#i-dd"/></svg><span class="sb">Spessore del bordo</span><div class="spin w1"><span>1,00</span><svg class="clr" viewBox="0 0 18 12"><path d="M5 0h13v12H5L0 6z" fill="#888"/><path d="M7.500 3l6 6M13.500 3l-6 6" stroke="#fff" stroke-width="1.600"/></svg><b><svg class="tri up"><use href="#tri"/></svg><svg class="tri"><use href="#tri"/></svg></b></div><svg class="dd"><use href="#i-dd"/></svg></div>
          <div class="prow right"><div class="opac"><i></i></div><div class="spin w2"><span>100,0 %</span><b><svg class="tri up dim"><use href="#tri"/></svg><svg class="tri"><use href="#tri"/></svg></b></div></div>
        </div>
        <div class="actions"><span class="btn primary"><svg viewBox="0 0 18 20"><path d="M7 1L2 5l5 4V6.500a5 5 0 1 1-4.500 7H.8a7.500 7.500 0 1 0 6.200-10z" fill="#6a9bd1" stroke="#34608f"/></svg>Aggiorna grafico</span><span class="btn conf">Configurazione<svg class="tri"><use href="#tri"/></svg></span></div>
      </div>
      <div class="scroll"><span><svg class="tri up"><use href="#tri"/></svg></span><i></i><span class="dn"><svg class="tri"><use href="#tri"/></svg></span></div>
    </div>
  </section>
</main>

<footer class="status">
  <span class="coords">x: 307.967 mm y: 161.221 mm&nbsp; pagina: 1</span>
  <div class="edit zoom">74.6%<b><svg class="tri"><use href="#tri"/></svg></b></div>
  <div class="zslider"><i></i></div>
</footer>

<div class="tooltip">
  <p><b><u>Sovrascrittura definita dai dati</u></b></p>
  <p><b>Attivo:</b> sì &nbsp; <i>(attivato con ctrl|click tasto destro del mouse)</i></p>
  <p><b>Ingresso atteso:</b></p>
  <p>stringa [<b>r,g,b,a</b>] come intero 0-255 o <b>#AARRGGBB</b> come hex</p>
  <p>o <b>colore</b> come nome del colore</p>
  <p><b>Tipi di ingresso validi:</b></p>
  <p>string</p>
  <p><b>Definizione corrente (expression):</b></p>
  <p>get_catg_color( "CIR_ID")</p>
</div>
<svg class="pointer" viewBox="0 0 94 94"><path d="M28 0H93.500V65L72 86.500V39.500L17.500 93 0 75.500 54.500 22H7z" fill="#da6445"/></svg>

<script src="app.js"></script>
</body>
</html>
```
FILE: styles.css
```css
* { box-sizing: border-box; }
body { margin: 0; width: 1920px; height: 1080px; overflow: hidden; display: flex; flex-direction: column; background: #efefef; color: #000; font: 15.500px/20px Lato, "Liberation Sans", sans-serif; letter-spacing: 0.1px; white-space: nowrap; position: relative; border-bottom: 2px solid #444; }
.defs { position: absolute; width: 0; height: 0; }
svg { display: block; flex: none; }
i, em { font-style: normal; }

.titlebar { height: 29px; background: #fff; display: flex; align-items: center; padding: 0 0 2px 2px; flex: none; }
.logo { width: 20px; height: 20px; margin-right: 5px; }
.wtitle { font-size: 15px; letter-spacing: -0.15px; }
.winbtns { margin-left: auto; display: flex; gap: 45px; padding-right: 25px; }
.winbtns svg { width: 14px; height: 14px; }

.menubar { height: 26px; flex: none; display: flex; gap: 14.800px; padding: 2px 0 0 11px; border-bottom: 1px solid #d2d2d2; }
.menubar u { text-underline-offset: 2px; }

.toolbar { height: 39px; flex: none; display: flex; align-items: center; padding-left: 5px; border-bottom: 1px solid #b4b4b4; background: linear-gradient(#fafafa, #ededed); }
.toolbar.second { height: 38px; }
.grip { width: 6px; height: 17px; margin-right: 3px; flex: none; background: radial-gradient(circle, #aaa 0.8px, transparent 1px) 0 0 / 3px 3px; }
.grip.mid { margin: 0 5px 0 8px; width: 5px; }
.slot { width: 33px; height: 33px; flex: none; display: flex; align-items: center; justify-content: center; }
.slot svg { width: 24px; height: 24px; }
.off { opacity: 0.4; }
.flip svg { transform: scaleX(-1); }
.greyed { filter: grayscale(1); }
.sep { flex: none; height: 19px; background: linear-gradient(#ccc, #ccc) center / 1px 100% no-repeat; }
.s8 { width: 8px; } .s9 { width: 9px; } .s7 { width: 7px; }
.pagecombo { width: 87px; height: 30px; border: 1px solid #a9a9a9; border-radius: 3px; display: flex; align-items: stretch; color: #777; background: #efefef; margin-right: 1px; line-height: 28px; padding-left: 4px; }
.pagecombo b { margin-left: auto; width: 25px; background: #f7f7f7; display: flex; align-items: center; justify-content: center; opacity: 0.6; }
.tri { width: 9px; height: 5px; }
.tri.up { transform: scaleY(-1); }
.tri.dim { opacity: 0.5; }
.ddarrow { width: 15px; padding-left: 3px; opacity: 0.6; }

.work { flex: 1; min-height: 0; display: flex; padding-top: 1px; }
.toolbox { width: 39px; flex: none; border-right: 1px solid #b4b4b4; background: linear-gradient(90deg, #fcfcfc, #efefef); display: flex; flex-direction: column; align-items: center; padding-top: 5px; margin-right: 1px; margin-top: -1px; }
.hgrip { width: 18px; height: 6px; margin-bottom: 4px; background: radial-gradient(circle, #aaa 0.8px, transparent 1px) 0 0 / 3px 3px; }
.toolbox span { width: 32px; height: 32px; flex: none; display: flex; align-items: center; justify-content: center; margin-right: -2px; }
.toolbox span svg { width: 23px; height: 24px; }
.toolbox .active { background: #d8d8d8; border: 1px solid #aaa; border-radius: 3px; height: 31px; margin: 1px -1px 0 0; }

.stage { width: 1179px; flex: none; display: grid; grid-template: 24px 888px / 24px 1155px; border-bottom: 1px solid #b4b4b4; }
.canvas { width: 1155px; height: 888px; background: #d7d7d7; }
.hruler { width: 1155px; height: 24px; }
.vruler { width: 24px; height: 888px; }
.hruler text, .vruler text { font-size: 12px; fill: #444; letter-spacing: 0; }
.maplabels text { font: 25px "DejaVu Sans", sans-serif; text-anchor: middle; letter-spacing: 0; fill: #333; stroke: #fff; stroke-width: 4.500px; paint-order: stroke; stroke-linejoin: round; }
.plottext text { font-family: "DejaVu Sans", sans-serif; fill: #3c4a66; letter-spacing: -0.05px; }

.vsplit { width: 7px; flex: none; display: flex; align-items: center; justify-content: center; }
.vsplit i { width: 3px; height: 17px; background: radial-gradient(circle, #aaa 0.7px, transparent 1px) 0 0 / 3px 3px; }
.dock { width: 694px; flex: none; display: flex; flex-direction: column; }
.tabs { height: 35px; flex: none; display: flex; align-items: flex-end; border-bottom: 1px solid #b4b4b4; letter-spacing: -0.1px; }
.tabs span { height: 33px; margin-bottom: -1px; border: 1px solid #b4b4b4; border-left: 0; border-radius: 3px 3px 0 0; background: #dcdcdc; display: flex; align-items: center; justify-content: center; }
.tabs .on { height: 36px; background: linear-gradient(#fcfcfc, #efefef); border-left: 1px solid #b4b4b4; border-bottom: 0; }
.tabs .t1 { width: 81px; padding-right: 2px; } .t2 { width: 169px; }
.l1 { width: 77px; } .l2 { width: 182px; } .l3 { width: 81px; } .l4 { width: 71px; }
.docktitle { height: 24px; flex: none; display: flex; align-items: center; padding: 0 1px 1px 4px; }
.docktitle em { margin-left: auto; display: flex; gap: 2px; }
.docktitle em svg { width: 12px; height: 12px; }
.table { height: 165px; flex: none; background: #fff; border: 1px solid #b0b0b0; }
.thead { height: 25px; display: flex; align-items: center; background: linear-gradient(#fcfcfc, #ececec); border-bottom: 1px solid #aaa; }
.thead .c1 { border-right: 1px solid #ccc; height: 24px; display: flex; align-items: center; }
.c1 { width: 42px; padding-left: 3px; flex: none; }
.thead span:last-child { padding-left: 2px; letter-spacing: -0.1px; }
.eye { width: 20px; height: 16px; } .padlock { width: 17px; height: 20px; }
.trow { height: 23px; display: flex; align-items: center; padding-bottom: 2px; letter-spacing: -0.1px; }
.trow > svg { width: 19px; height: 19px; margin: 0 6px 0 4px; }
.check { display: block; width: 17px; height: 17px; background: #fff; border: 1px solid #b4b4b4; flex: none; }
.check svg { width: 15px; height: 15px; }
.hsplit { height: 6px; flex: none; display: flex; align-items: center; justify-content: center; }
.hsplit i { width: 17px; height: 3px; background: radial-gradient(circle, #aaa 0.7px, transparent 1px) 0 0 / 3px 3px; }
.docktitle.low { height: 25px; padding: 0 1px 1px 4px; }
.back { height: 33px; flex: none; display: flex; gap: 11px; align-items: flex-start; line-height: 25px; }
.btn { border: 1px solid #b0b0b0; border-radius: 3px; background: linear-gradient(#fff, #efefef); display: flex; align-items: center; justify-content: center; }
.back .btn { width: 28px; height: 27px; }
.back svg { width: 14px; height: 18px; }

.props { flex: 1; min-height: 0; display: flex; overflow: hidden; padding-left: 3px; }
.darkstrip { width: 38px; flex: none; background: #5e5e5e; margin-bottom: 3px; }
.form { width: 637px; padding: 0 14px 0 8px; flex: none; display: flex; flex-direction: column; overflow: hidden; }
.group { border: 1px solid #d5d5d5; border-radius: 2px; background: #ebebeb; padding: 0 12px; flex: none; }
.group.first { margin-top: -8px; height: 255px; border-top: 0; }
.frow { display: flex; align-items: center; height: 30px; }
.frow.cut { line-height: 14px; }
.frow label { width: 156px; flex: none; letter-spacing: 0.15px; }
.combo { flex: 1; height: 29px; border: 1px solid #aaa; border-radius: 3px; background: linear-gradient(#fdfdfd, #ececec); display: flex; align-items: center; padding: 0 9px 0 6px; letter-spacing: -0.05px; }
.combo .tri, .conf .tri { margin-left: auto; }
.poly { width: 20px; height: 16px; margin-right: 2px; }
.mp { width: 19px; height: 19px; margin-right: 3px; }
.filt { height: 42px; }
.filt .dd { margin-left: 3px; }
.filt + .frow { height: 29px; }
.dd { width: 26px; height: 20px; }
.frow .check { margin-right: 6px; }
.chk { letter-spacing: 0.2px; }
.c-a { height: 41px; } .c-b { height: 27px; }
.fx { height: 42px; } .fy { height: 30px; }
.edit { flex: 1; height: 30px; background: #fff; border: 1px solid #aaa; border-radius: 3px; display: flex; align-items: center; padding: 0 0 0 3px; letter-spacing: -0.1px; }
.edit b { margin-left: auto; width: 25px; height: 28px; background: linear-gradient(#fdfdfd, #ececec); display: flex; align-items: center; justify-content: center; }
.edit small { font-size: 12px; font-weight: bold; color: #666; margin-right: 4px; }
.eps { width: 28px; height: 30px; margin-left: 7px; color: #6b3f73; font: 18px/20px "DejaVu Sans", sans-serif; }
.ghead { height: 32px; flex: none; display: flex; align-items: center; gap: 9px; font-weight: bold; padding: 4px 0 0 2px; letter-spacing: 0; }
.ghead svg { width: 10px; height: 8px; }
.group.second { height: 127px; padding-top: 8px; margin-top: 0; }
.prow { height: 35px; display: flex; align-items: center; }
.prow label { width: 123px; }
.color { width: 132px; height: 26px; border: 1px solid #aaa; border-radius: 3px; background: #f6f6f6; padding: 3px; }
.color i { display: block; height: 18px; background: #8db8d9; border-radius: 2px; }
.cdd { width: 15px; height: 26px; border: 1px solid #aaa; border-radius: 3px; background: #f6f6f6; margin-right: 11px; display: flex; align-items: center; justify-content: center; }
.prow.right { justify-content: flex-end; }
.sb { margin: 0 7px 0 9px; letter-spacing: 0.15px; }
.spin { height: 27px; border: 1px solid #aaa; border-radius: 3px; background: #fff; display: flex; align-items: center; padding-left: 4px; letter-spacing: -0.1px; }
.w1 { width: 93px; margin-right: 11px; } .w2 { width: 100px; margin-left: 4px; }
.prow.right .dd:last-child { margin-right: 3px; }
.spin b { margin-left: auto; width: 17px; height: 25px; border-left: 1px solid #bbb; background: #f8f8f8; display: flex; flex-direction: column; gap: 6px; align-items: center; justify-content: center; }
.clr { width: 17px; height: 13px; margin-left: auto; margin-right: -6px; }
.w1 b { margin-left: 17px; }
.opac { width: 320px; height: 6px; background: #55a3ee; border: 1px solid #1b62b8; display: flex; align-items: center; justify-content: flex-end; }
.opac i, .zslider i { width: 16px; height: 17px; flex: none; background: #fff; border: 1px solid #999; border-radius: 3px; }
.actions { margin-top: auto; display: flex; gap: 7px; justify-content: flex-end; margin-right: -10px; padding-bottom: 3px; align-items: center; flex: none; letter-spacing: -0.1px; }
.primary { border-color: #4c9be6; background: linear-gradient(#fbfdff, #dceaf8); height: 28px; width: 146px; gap: 1px; }
.primary svg { width: 18px; height: 20px; }
.conf { width: 128px; height: 30px; padding: 0 4px 0 3px; }
.scroll { flex: 1; border-left: 1px solid #bbb; background: #f7f7f7; display: flex; flex-direction: column; }
.scroll span { height: 17px; display: flex; align-items: center; justify-content: center; background: #fafafa; }
.scroll i { height: 71px; background: #dedede; border: 1px solid #bbb; border-width: 1px 0; }
.scroll .dn { margin-top: auto; border-top: 1px solid #bbb; }

.status { height: 32px; flex: none; display: flex; align-items: center; padding-left: 1244px; padding-top: 1px; }
.coords { width: 331px; letter-spacing: 0.3px; }
.zoom { flex: none; width: 238px; }
.zslider { width: 98px; height: 5px; margin-left: 7px; border: 1px solid #aaa; background: linear-gradient(90deg, #4c9be6 8px, #ddd 8px); display: flex; align-items: center; padding-left: 5px; }

.tooltip { position: absolute; left: 1159px; top: 780px; width: 422px; height: 195px; background: #ffffdc; border: 1px solid #000; box-shadow: 3px 3px 4px rgba(0, 0, 0, 0.45); padding: 2px 3px; line-height: 21px; letter-spacing: 0.07px; }
.tooltip p { margin: 0; }
.tooltip p i { font-style: italic; letter-spacing: 0.7px; }
.pointer { position: absolute; left: 1124px; top: 973px; width: 94px; height: 94px; }
```
FILE: app.js
```js
const NS = 'http://www.w3.org/2000/svg';
function add(parent, tag, attrs, text) {
  const el = document.createElementNS(NS, tag);
  for (const k in attrs) el.setAttribute(k, attrs[k]);
  if (text !== undefined) el.textContent = text;
  parent.appendChild(el);
}

// rulers: a tick each 2 mm, longer at 10 mm, full height and numbered at 20 mm
const MM = 3.521;
const h = document.getElementById('hruler');
const v = document.getElementById('vruler');
for (let mm = -14; mm <= 312; mm += 2) {
  const x = Math.floor(117 + mm * MM) + 0.5;
  const y1 = mm % 20 === 0 ? 133 : mm % 10 === 0 ? 149 : 152;
  add(h, 'path', { d: `M${x} ${y1}V157`, stroke: '#333' });
  if (mm % 20 === 0) add(h, 'text', { x: x + 1.5, y: 147 }, mm);
}
for (let mm = -20; mm <= 230; mm += 2) {
  const y = Math.floor(231 + mm * MM) + 0.5;
  const x1 = mm % 20 === 0 ? 40 : mm % 10 === 0 ? 56 : 59;
  add(v, 'path', { d: `M${x1} ${y}H64`, stroke: '#333' });
  if (mm % 20 === 0) add(v, 'text', { transform: `translate(54 ${y + 4}) rotate(-90)`, 'text-anchor': 'end' }, mm);
}
add(h, 'path', { d: 'M1202.5 133V157', stroke: '#e01010' });
add(v, 'path', { d: 'M40 799.5H64', stroke: '#e01010' });

// plot: area of each district
const bars = [
  [741.8, '#6c2ad2'], [646, '#7ee5a8'], [394.6, '#d4e131'], [428.2, '#76ced4'],
  [548.9, '#ea80e6'], [488.9, '#e03968'], [401.4, '#2f5dd6'], [573.6, '#c7885f']
];
const g = document.getElementById('bars');
const t = document.getElementById('ticks');
bars.forEach(([top, fill], i) => {
  const x = 747 + i * 40.5;
  add(g, 'rect', { x, y: top, width: 32.7, height: 772.2 - top, fill });
  add(t, 'text', { x: x + 16, y: 778.5, 'text-anchor': 'middle' }, i + 1);
});
for (let k = 0; k <= 6; k++) {
  add(t, 'text', { x: 742, y: 773.4 - k * 60.8, 'text-anchor': 'end' }, k * 5);
}
```
